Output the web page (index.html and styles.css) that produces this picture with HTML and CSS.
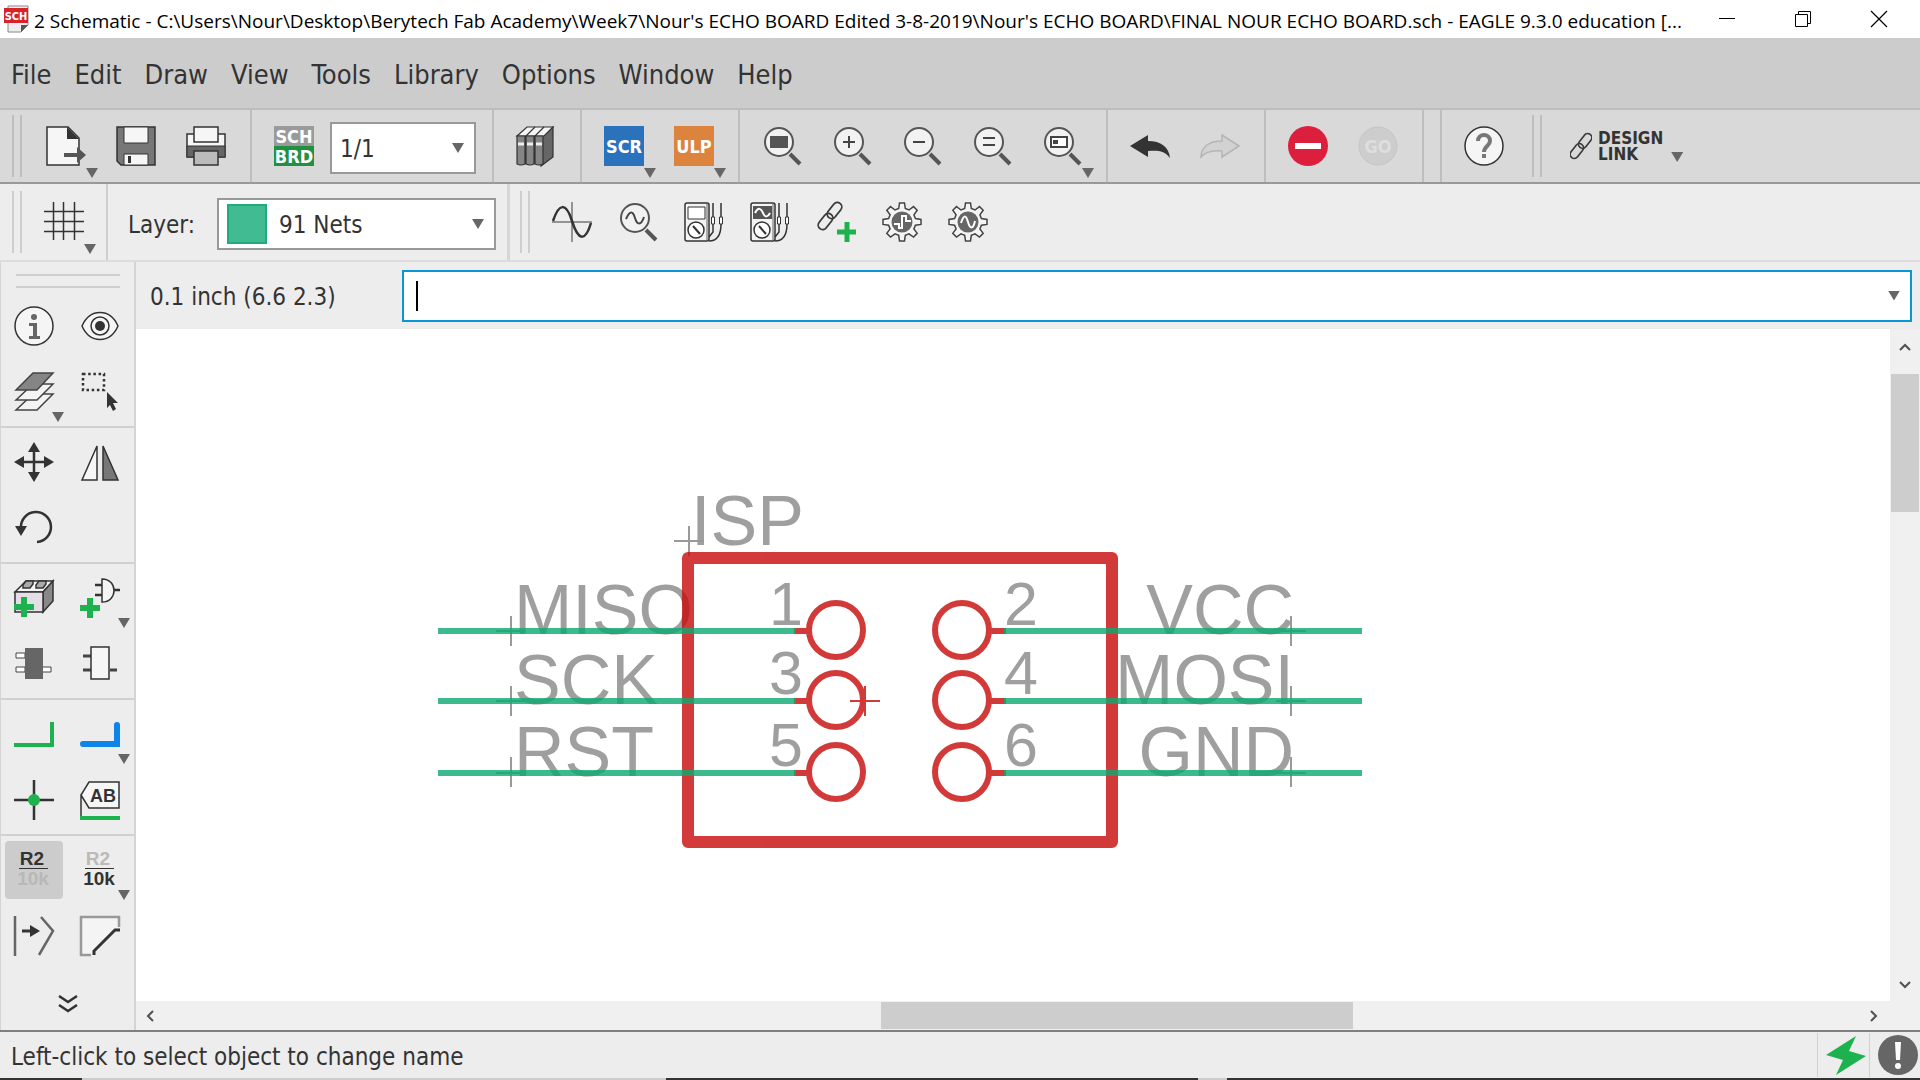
FILE: index.html
```html
<!DOCTYPE html>
<html lang="en">
<head>
<meta charset="utf-8">
<meta name="viewport" content="width=device-width, initial-scale=1">
<title>2 Schematic - EAGLE 9.3.0 education</title>
<link rel="stylesheet" href="styles.css">
</head>
<body>
<svg class="defs" aria-hidden="true">
  <symbol id="lens" viewBox="0 0 40 40">
    <path d="M28 28L38 38" stroke="#555" stroke-width="4"/>
    <circle cx="17" cy="16" r="14" fill="#f2f2f2" stroke="#555" stroke-width="2"/>
  </symbol>
  <symbol id="chain" viewBox="0 0 24 30">
    <g fill="none" stroke="#3a3a3a" stroke-width="1.800">
      <rect x="-4.500" y="-9" width="9" height="18" rx="4.500" transform="translate(16.500 9.500) rotate(38)"/>
      <rect x="-4.500" y="-9" width="9" height="18" rx="4.500" transform="translate(7.500 20.500) rotate(38)"/>
    </g>
  </symbol>
  <symbol id="meter" viewBox="0 0 40 40">
    <rect x="1" y="1" width="24" height="38" rx="2" fill="#f4f4f4" stroke="#333" stroke-width="1.5"/>
    <path d="M22 2h2v36h-2z" fill="#aaa"/>
    <circle cx="12" cy="28" r="8" fill="#fff" stroke="#333" stroke-width="1.5"/>
    <path d="M9 24L16 32" stroke="#333" stroke-width="2"/>
    <path d="M29 1v14M37 1v14" stroke="#333" stroke-width="1.5"/>
    <path d="M27.500 15h3v7h-3zM35.500 15h3v7h-3z" fill="#fff" stroke="#333"/>
    <path d="M29 22v8l-4 5M37 22c0 10-3 17-12 17" fill="none" stroke="#333" stroke-width="1.5"/>
  </symbol>
  <symbol id="gear" viewBox="0 0 40 40">
    <path d="M17.500 1h5l.8 5.500 3.700 1.500 4.500-3.400 3.700 3.700-3.300 4.500 1.500 3.700 5.600.9v5l-5.600.8-1.500 3.700 3.300 4.500-3.700 3.700-4.500-3.300-3.700 1.500-.8 5.600h-5l-.8-5.600-3.700-1.500-4.500 3.300-3.700-3.700 3.300-4.500-1.500-3.700L1 22.400v-5l5.600-.9 1.500-3.700-3.300-4.500 3.700-3.700L13 8l3.700-1.500z" fill="#f4f4f4" stroke="#444" stroke-width="1.500"/>
    <circle cx="20" cy="20" r="10.500" fill="#666"/>
  </symbol>
</svg>

<header class="titlebar">
  <svg class="app-icon" viewBox="0 0 26 28" aria-hidden="true">
    <path d="M4 1h20v19l-7 7H4z" fill="#eee" stroke="#888"/>
    <path d="M24 20h-7v7z" fill="#555"/>
    <path d="M0 3h24v15H0z" fill="#d8232a"/>
    <text x="12" y="15" class="glyph" font-size="11" fill="#fff" text-anchor="middle">SCH</text>
  </svg>
  <h1 class="title">2 Schematic - C:\Users\Nour\Desktop\Berytech Fab Academy\Week7\Nour's ECHO BOARD Edited 3-8-2019\Nour's ECHO BOARD\FINAL NOUR ECHO BOARD.sch - EAGLE 9.3.0 education [...</h1>
  <div class="window-controls">
    <button aria-label="Minimize"><svg viewBox="0 0 18 18"><path d="M1 8.500h16" stroke="#000"/></svg></button>
    <button aria-label="Restore"><svg viewBox="0 0 18 18" fill="none" stroke="#000"><path d="M1.500 4.500h12v12h-12zM4.500 4v-2.500h12v12h-3"/></svg></button>
    <button aria-label="Close"><svg viewBox="0 0 18 18"><path d="M1 1l16 16M17 1L1 17" stroke="#000" stroke-width="1.200"/></svg></button>
  </div>
</header>

<nav class="menubar" aria-label="Main menu">
  <button>File</button><button>Edit</button><button>Draw</button><button>View</button><button>Tools</button><button>Library</button><button>Options</button><button>Window</button><button>Help</button>
</nav>

<div class="toolbar primary" role="toolbar" aria-label="Actions">
  <span class="grip"></span>
  <div class="group">
    <button class="tool drop" aria-label="Open">
      <svg viewBox="0 0 40 40"><path d="M1 1h21l11 11v27H1z" fill="#f6f6f6" stroke="#333" stroke-width="1.500"/><path d="M21 1l12 12H21z" fill="#333"/><path d="M18 27h13v-6l9 8-9 8v-6H18z" fill="#555"/></svg>
    </button>
    <button class="tool" aria-label="Save">
      <svg viewBox="0 0 40 40"><path d="M1 1h38v38H5l-4-4z" fill="#777" stroke="#333" stroke-width="1.500"/><path d="M8 1h24v16H8z" fill="#f6f6f6" stroke="#333"/><path d="M8 28h24v11H8z" fill="#f6f6f6" stroke="#333"/><path d="M12 30h3v7h-3z" fill="#333"/></svg>
    </button>
    <button class="tool" aria-label="Print">
      <svg viewBox="0 0 40 40"><path d="M1 8h38v23H1z" fill="#f6f6f6" stroke="#333" stroke-width="1.500"/><path d="M1 20h38v11H1z" fill="#666" stroke="#333"/><path d="M8 1h24v15H8z" fill="#f6f6f6" stroke="#333" stroke-width="1.500"/><path d="M8 25h24v14H8z" fill="#bbb" stroke="#333" stroke-width="1.500"/></svg>
    </button>
  </div>
  <div class="group fields">
    <button class="tool" aria-label="Switch to board">
      <svg viewBox="0 0 40 40"><path d="M0 0h40v20H0z" fill="#9a9a9a"/><path d="M0 20h40v20H0z" fill="#1f9140"/><text x="20" y="17" class="glyph" font-size="18" fill="#fff" text-anchor="middle">SCH</text><text x="20" y="37" class="glyph" font-size="18" fill="#fff" text-anchor="middle">BRD</text></svg>
    </button>
    <div class="combo sheet">
      <select aria-label="Sheet"><option>1/1</option></select>
    </div>
  </div>
  <div class="group">
    <button class="tool" aria-label="Library manager">
      <svg viewBox="0 0 40 40" stroke="#333" stroke-width="1.200"><path d="M25 10l12-9v30l-12 9z" fill="#666"/><path d="M1 10L11 1h26l-9 9z" fill="#f4f4f4"/><path d="M10 10l9-9M19 10l9-9"/><path d="M1 10h8v28q-4 2-8 0zM10 10h8v28q-4 2-8 0zM19 10h8v28q-4 2-8 0z" fill="#858585"/><path d="M2 18h6M11 18h6M20 18h6" stroke="#eee" stroke-width="3"/></svg>
    </button>
  </div>
  <div class="group">
    <button class="tool drop" aria-label="Run script"><svg viewBox="0 0 40 40"><path d="M0 0h40v40H0z" fill="#2b72bd"/><text x="20" y="27" class="glyph" font-size="18" fill="#fff" text-anchor="middle">SCR</text></svg></button>
    <button class="tool drop" aria-label="Run ULP"><svg viewBox="0 0 40 40"><path d="M0 0h40v40H0z" fill="#dc843d"/><text x="20" y="27" class="glyph" font-size="18" fill="#fff" text-anchor="middle">ULP</text></svg></button>
  </div>
  <div class="group">
    <button class="tool" aria-label="Zoom to fit"><svg viewBox="0 0 40 40"><use href="#lens"/><path d="M8 10h18v12H8z" fill="#555"/></svg></button>
    <button class="tool" aria-label="Zoom in"><svg viewBox="0 0 40 40"><use href="#lens"/><path d="M11 16h12M17 10v12" stroke="#444" stroke-width="2"/></svg></button>
    <button class="tool" aria-label="Zoom out"><svg viewBox="0 0 40 40"><use href="#lens"/><path d="M11 16h12" stroke="#444" stroke-width="2"/></svg></button>
    <button class="tool" aria-label="Redraw"><svg viewBox="0 0 40 40"><use href="#lens"/><path d="M11 12h12M11 19h12" stroke="#444" stroke-width="2"/></svg></button>
    <button class="tool drop" aria-label="Zoom select"><svg viewBox="0 0 40 40"><use href="#lens"/><path d="M9 11h16v10H9z" fill="#fff" stroke="#444" stroke-width="2"/><path d="M11 14h5v4h-5z" fill="#444"/></svg></button>
  </div>
  <div class="group">
    <button class="tool" aria-label="Undo"><svg viewBox="0 0 40 40"><path d="M0 20L18 9v6c13 0 21 6 22 17-5-7-12-8-22-7v6z" fill="#333"/></svg></button>
    <button class="tool" aria-label="Redo" disabled><svg viewBox="0 0 40 40"><path d="M39 20L22 9v6C9 15 1 21 1 31c5-6 12-7 21-6v6z" fill="#d2d2d2" stroke="#b5b5b5" stroke-width="1.500"/></svg></button>
  </div>
  <div class="group">
    <button class="tool" aria-label="Stop"><svg viewBox="0 0 40 40"><circle cx="20" cy="20" r="20" fill="#dc1f3c"/><path d="M7 17h26v6H7z" fill="#fff"/></svg></button>
    <button class="tool" aria-label="Go" disabled><svg viewBox="0 0 40 40"><circle cx="20" cy="20" r="19" fill="#cdcdcd" stroke="#c5c5c5"/><text x="20" y="27" class="glyph" font-size="18" fill="#dedede" text-anchor="middle">GO</text></svg></button>
  </div>
  <div class="group help">
    <button class="tool" aria-label="Help"><svg viewBox="0 0 40 40"><circle cx="20" cy="20" r="19" fill="#f5f5f5" stroke="#333" stroke-width="1.500"/><path d="M14 15c0-8 12-8 12 0 0 5-6 5-6 11" fill="none" stroke="#777" stroke-width="4"/><path d="M18 28h4v4h-4z" fill="#777"/></svg></button>
  </div>
  <span class="grip"></span>
  <button class="design-link drop">
    <svg viewBox="0 0 24 30" aria-hidden="true"><use href="#chain"/></svg>
    <span>DESIGN<br>LINK</span>
  </button>
</div>

<div class="toolbar secondary" role="toolbar" aria-label="Parameters">
  <span class="grip"></span>
  <div class="group grid">
    <button class="tool drop" aria-label="Grid"><svg viewBox="0 0 40 40"><path d="M0 9.500h40M0 19.500h40M0 29.500h40M9.500 0v38M19.500 0v38M30.500 0v38" stroke="#333" stroke-width="1.500"/></svg></button>
  </div>
  <div class="layer">
    <label for="layer">Layer:</label>
    <div class="combo">
      <span class="swatch"></span>
      <select id="layer"><option>91 Nets</option></select>
    </div>
  </div>
  <span class="grip"></span>
  <div class="group simulate">
    <button class="tool" aria-label="Simulate"><svg viewBox="0 0 40 40"><path d="M20 0v40M0 20h40" stroke="#777" stroke-width="1.500"/><path d="M1 19C7 1 14 0 20 19s13 22 19 2" fill="none" stroke="#333" stroke-width="2.500"/></svg></button>
    <button class="tool" aria-label="Probe"><svg viewBox="0 0 40 40"><use href="#lens"/><path d="M8 17c4-9 7-8 9-1s6 8 9-1" fill="none" stroke="#444" stroke-width="2"/></svg></button>
    <button class="tool" aria-label="Voltage meter"><svg viewBox="0 0 40 40"><use href="#meter"/><path d="M4 5h17v12H4z" fill="#fff" stroke="#333"/></svg></button>
    <button class="tool" aria-label="Phase meter"><svg viewBox="0 0 40 40"><use href="#meter"/><path d="M3 4h19v13H3z" fill="#555"/><path d="M5 11c3-6 6-5 8 0s5 4 7 0" fill="none" stroke="#fff" stroke-width="2"/></svg></button>
    <button class="tool" aria-label="Add model"><svg viewBox="0 0 40 40"><use href="#chain" width="28" height="30" x="0" y="-1"/><path d="M31 20v20M21 30h19" stroke="#1eb24f" stroke-width="5"/></svg></button>
    <button class="tool" aria-label="Digital setup"><svg viewBox="0 0 40 40"><use href="#gear"/><path d="M12 22h5v4h3V14h4v5h5" fill="none" stroke="#fff" stroke-width="2"/></svg></button>
    <button class="tool" aria-label="Analog setup"><svg viewBox="0 0 40 40"><use href="#gear"/><path d="M13 21c3-9 5-8 7-1s5 8 7-1" fill="none" stroke="#fff" stroke-width="2"/></svg></button>
  </div>
</div>

<div class="workspace">
  <aside class="palette" aria-label="Tools">
    <div class="tools first">
      <button class="tool" aria-label="Info"><svg viewBox="0 0 40 40"><circle cx="20" cy="20" r="19" fill="#f5f5f5" stroke="#333" stroke-width="1.500"/><path d="M15 17h8v13h3v3H15v-3h4V20h-4z" fill="#666"/><circle cx="20" cy="11" r="3" fill="#666"/></svg></button>
      <button class="tool" aria-label="Show"><svg viewBox="0 0 40 40"><path d="M2 20C10 2 30 2 38 20 30 38 10 38 2 20z" fill="#f5f5f5" stroke="#333" stroke-width="1.500"/><circle cx="20" cy="20" r="9" fill="none" stroke="#333" stroke-width="1.500"/><circle cx="20" cy="20" r="5" fill="#333"/></svg></button>
      <button class="tool drop" aria-label="Layer settings"><svg viewBox="0 0 40 40" stroke="#444" stroke-width="1.500"><path d="M2 38L19 22h20L23 38z" fill="#f4f4f4"/><path d="M2 28L19 12h20L23 28z" fill="#f4f4f4"/><path d="M2 18L19 1h20L23 18z" fill="#858585"/></svg></button>
      <button class="tool" aria-label="Group"><svg viewBox="0 0 40 40"><path d="M3 2h21v16H3z" fill="none" stroke="#333" stroke-width="2.500" stroke-dasharray="2.500 2.700"/><path d="M27 20l11 11h-5l3 6-3 2-3-6-3 3z" fill="#333"/></svg></button>
    </div>
    <div class="tools">
      <button class="tool" aria-label="Move"><svg viewBox="0 0 40 40"><path d="M20 6v28M6 20h28" stroke="#333" stroke-width="2.500"/><path d="M20 0l6 10H14zM20 40l6-10H14zM0 20l10-6v12zM40 20l-10-6v12z" fill="#333"/></svg></button>
      <button class="tool" aria-label="Mirror"><svg viewBox="0 0 40 40" stroke="#333" stroke-width="1.500"><path d="M17 4v34H2z" fill="#f6f6f6"/><path d="M23 4v34h15z" fill="#777"/></svg></button>
      <button class="tool" aria-label="Rotate"><svg viewBox="0 0 40 40"><path d="M7 20a15 15 0 1 1 16 14" fill="none" stroke="#333" stroke-width="2.500"/><path d="M1 18h12L7 28z" fill="#333"/></svg></button>
    </div>
    <div class="tools">
      <button class="tool" aria-label="Add part"><svg viewBox="0 0 40 40" stroke="#333" stroke-width="1.500"><path d="M1 14L12 3h27L29 14z" fill="#f5f5f5"/><path d="M29 14L39 3v20L29 34z" fill="#888"/><path d="M1 14h28v20H1z" fill="#e4dfe6"/><path d="M9 7l3-4h7v3l-3 4H9zM22 7l3-4h7v3l-3 4h-7z" fill="#aaa"/><path d="M10 19v20M0 29h20" stroke="#1eb24f" stroke-width="6"/></svg></button>
      <button class="tool drop" aria-label="Add gate"><svg viewBox="0 0 40 40"><path d="M22 1c16 0 16 23 0 23z" fill="#f5f5f5" stroke="#333" stroke-width="1.500"/><path d="M15 7h7M15 17h7M34 12h6" stroke="#333" stroke-width="2.500"/><path d="M10 20v20M0 30h20" stroke="#1eb24f" stroke-width="6"/></svg></button>
      <button class="tool" aria-label="Replace part"><svg viewBox="0 0 40 40"><path d="M2 9h9v5H2zM2 23h9v5H2zM28 23h9v5h-9z" fill="#fff" stroke="#444"/><path d="M11 4h18v31H11z" fill="#666"/></svg></button>
      <button class="tool" aria-label="Replace symbol"><svg viewBox="0 0 40 40"><path d="M3 12h8M3 26h8M30 26h7" stroke="#444" stroke-width="3"/><path d="M11 3h18v32H11z" fill="#f6f6f6" stroke="#333" stroke-width="1.500"/></svg></button>
    </div>
    <div class="tools">
      <button class="tool" aria-label="Net"><svg viewBox="0 0 40 40"><path d="M0 31h38V8" fill="none" stroke="#1eb24f" stroke-width="4"/></svg></button>
      <button class="tool drop" aria-label="Bus"><svg viewBox="0 0 40 40"><path d="M3 30h34V11" fill="none" stroke="#0d84e8" stroke-width="6" stroke-linecap="round"/></svg></button>
      <button class="tool" aria-label="Junction"><svg viewBox="0 0 40 40"><path d="M20 0v40M0 20h40" stroke="#333" stroke-width="2.500"/><circle cx="20" cy="20" r="6" fill="#1eb24f"/></svg></button>
      <button class="tool" aria-label="Label"><svg viewBox="0 0 40 40"><path d="M1 36V15L9 2h30v26H9L1 15" fill="#f6f6f6" stroke="#333" stroke-width="1.500"/><text x="23" y="22" class="bold-glyph" font-size="18" fill="#333" text-anchor="middle">AB</text><path d="M0 38h40" stroke="#1eb24f" stroke-width="4"/></svg></button>
    </div>
    <div class="tools">
      <button class="tool selected" aria-label="Name"><svg viewBox="0 0 40 40"><text x="18" y="15" class="bold-glyph" font-size="19" fill="#333" text-anchor="middle">R2</text><path d="M5 18.500h29" stroke="#333"/><text x="19" y="35" class="bold-glyph" font-size="19" fill="#b8b8b8" text-anchor="middle">10k</text></svg></button>
      <button class="tool drop" aria-label="Value"><svg viewBox="0 0 40 40"><text x="18" y="15" class="bold-glyph" font-size="19" fill="#bababa" text-anchor="middle">R2</text><path d="M5 18.500h29" stroke="#333"/><text x="19" y="35" class="bold-glyph" font-size="19" fill="#333" text-anchor="middle">10k</text></svg></button>
      <button class="tool" aria-label="Split"><svg viewBox="0 0 40 40"><path d="M1 0v40M27 1l12 14-14 24" fill="none" stroke="#666" stroke-width="2.500"/><path d="M8 15h11" stroke="#333" stroke-width="3"/><path d="M16 9l10 6-10 6z" fill="#333"/></svg></button>
      <button class="tool" aria-label="Miter"><svg viewBox="0 0 40 40"><path d="M11 39H1V1h38v10" fill="#f4f4f4" stroke="#999" stroke-width="2.500"/><path d="M14 39v-4l21-21h5" fill="none" stroke="#333" stroke-width="3"/></svg></button>
    </div>
    <button class="more" aria-label="More tools"><svg viewBox="0 0 20 18"><path d="M1 1l9 6 9-6M1 10l9 6 9-6" fill="none" stroke="#333" stroke-width="2.500"/></svg></button>
  </aside>

  <main class="editor">
    <div class="command">
      <span class="coords">0.1 inch (6.6 2.3)</span>
      <div class="combo command-line"><span class="caret"></span><input type="text" aria-label="Command line"></div>
    </div>
    <div class="sheet-view">
      <svg class="schematic" viewBox="136 329 1754 672" role="img" aria-label="ISP connector schematic">
        <g class="names">
          <text x="691" y="545">ISP</text>
          <text x="514" y="634">MISO</text><text x="514" y="704">SCK</text><text x="514" y="776">RST</text>
          <g text-anchor="end"><text x="1294" y="634">VCC</text><text x="1294" y="704">MOSI</text><text x="1294" y="776">GND</text></g>
        </g>
        <g class="pads">
          <text x="769" y="625">1</text><text x="769" y="694">3</text><text x="769" y="766">5</text>
          <text x="1004" y="625">2</text><text x="1004" y="694">4</text><text x="1004" y="766">6</text>
        </g>
        <path class="origin" d="M674 541h30M689 526v30M496 631h30M511 616v30M496 701h30M511 686v30M496 773h30M511 757v30M1276 631h30M1291 616v30M1276 701h30M1291 686v30M1276 773h30M1291 757v30"/>
        <g class="symbol">
          <rect x="688" y="558" width="424" height="284" stroke-width="12" stroke-linejoin="round"/>
          <g stroke-width="6">
            <circle cx="836" cy="630" r="27"/><circle cx="836" cy="700" r="27"/><circle cx="836" cy="772" r="27"/>
            <circle cx="962" cy="630" r="27"/><circle cx="962" cy="700" r="27"/><circle cx="962" cy="772" r="27"/>
            <path d="M794 631h13M794 701h13M794 773h13M991 631h15M991 701h15M991 773h15"/>
          </g>
          <path stroke-width="2" d="M850 701h30M865 686v30"/>
        </g>
        <path class="nets" d="M438 631h358M438 701h358M438 773h358M1004 631h358M1004 701h358M1004 773h358"/>
      </svg>
      <div class="vscroll"><svg viewBox="0 0 12 8"><path d="M1 7l5-5 5 5"/></svg><span class="thumb"></span><svg viewBox="0 0 12 8"><path d="M1 1l5 5 5-5"/></svg></div>
      <div class="hscroll"><svg viewBox="0 0 8 12"><path d="M7 1L2 6l5 5"/></svg><span class="thumb"></span><svg viewBox="0 0 8 12"><path d="M1 1l5 5-5 5"/></svg></div>
    </div>
  </main>
</div>

<footer class="status">
  <span class="message">Left-click to select object to change name</span>
  <button aria-label="Live update"><svg viewBox="0 0 40 40"><path d="M30 1L0 20l17 5-7 15 30-19-17-5z" fill="#1eb24f"/></svg></button>
  <button aria-label="Errors"><svg viewBox="0 0 40 40"><circle cx="20" cy="20" r="20" fill="#666"/><path d="M17 7h6l-1 18h-4z" fill="#fff"/><circle cx="20" cy="31" r="3" fill="#fff"/></svg></button>
</footer>
</body>
</html>
```
FILE: styles.css
```css
* { box-sizing: border-box; }

body {
  display: flex;
  flex-direction: column;
  min-height: 100vh;
  margin: 0;
  background: #ededed;
  color: #333;
  font: 24px "DejaVu Sans Condensed", "DejaVu Sans", sans-serif;
}

button {
  padding: 0;
  border: 0;
  background: none;
  color: inherit;
  font: inherit;
}

svg { display: block; }
.defs { position: absolute; width: 0; height: 0; }
.glyph { font-family: "DejaVu Sans Condensed", sans-serif; font-weight: bold; }
.bold-glyph { font-family: "Liberation Sans", sans-serif; font-weight: bold; }

/* Title bar */
.titlebar {
  display: flex;
  align-items: center;
  height: 38px;
  padding-left: 4px;
  background: #fff;
}
.app-icon { flex: none; width: 26px; height: 28px; }
.title {
  flex: 1;
  min-width: 0;
  margin: 4px 0 0 4px;
  overflow: hidden;
  color: #000;
  font: 19px "Open Sans", sans-serif;
  white-space: nowrap;
}
.window-controls { display: flex; flex: none; padding-right: 3px; }
.window-controls button { display: grid; place-items: center; width: 76px; height: 38px; }
.window-controls svg { width: 18px; height: 18px; }

/* Menu bar */
.menubar {
  display: flex;
  gap: 23px;
  height: 72px;
  padding: 2px 0 0 11px;
  border-bottom: 2px solid #bdbdbd;
  background: #ccc;
  font-size: 27px;
}

/* Toolbars */
.toolbar { display: flex; align-items: center; padding-left: 12px; }
.primary { height: 74px; border-bottom: 2px solid #999; background: #d9d9d9; }
.secondary { height: 78px; border-bottom: 2px solid #dcdcdc; }
.grip {
  flex: none;
  width: 10px;
  height: 62px;
  border: solid #bebebe;
  border-width: 0 2px;
}
.primary .grip:first-child { margin-right: 2px; }
.secondary .grip { border-color: #cecece; }
.group {
  display: flex;
  align-items: center;
  gap: 30px;
  height: 100%;
  padding: 0 24px 0 22px;
  border-right: 2px solid #bebebe;
}
.fields { gap: 16px; padding-right: 16px; }
.help { margin-left: 16px; padding-right: 28px; border-right: 0; border-left: 2px solid #bebebe; }
.tool { position: relative; flex: none; width: 40px; height: 40px; }
.tool svg { width: 40px; height: 40px; overflow: visible; }

.drop::after,
.combo::after {
  content: "";
  width: 12px;
  height: 10px;
  background: #666;
  clip-path: polygon(0 0, 100% 0, 50% 100%);
}
.drop::after { position: absolute; right: -12px; bottom: -12px; }

.design-link {
  display: flex;
  align-items: center;
  gap: 6px;
  position: relative;
  margin-left: 28px;
  font: bold 17px/16px "DejaVu Sans Condensed", sans-serif;
  text-align: left;
}
.design-link svg { width: 22px; height: 28px; }
.design-link.drop::after { right: -20px; bottom: 0; }

.combo {
  display: flex;
  align-items: center;
  height: 52px;
  padding: 0 10px 0 8px;
  border: 2px solid #999;
  background: #fff;
}
.combo select,
.combo input {
  flex: 1;
  min-width: 0;
  height: 100%;
  padding: 2px 0 0;
  border: 0;
  outline: 0;
  appearance: none;
  background: none;
  color: inherit;
  font: inherit;
}
.sheet { width: 146px; margin-top: 4px; }
.layer {
  display: flex;
  align-items: center;
  height: 100%;
  margin-right: 10px;
  padding: 4px 11px 0 20px;
  border-right: 3px solid #d6d6d6;
}
.layer label { width: 89px; padding-top: 2px; }
.layer .combo { width: 279px; }
.swatch {
  width: 40px;
  height: 40px;
  margin-right: 12px;
  border: 2px solid #1fac79;
  background: #41bb92;
}
.secondary .group { border-color: #cecece; }
.secondary .grid { padding-right: 22px; }
.secondary .simulate { gap: 26px; border: 0; }

/* Tool palette */
.workspace { display: flex; flex: 1; }
.palette {
  display: flex;
  flex: none;
  flex-direction: column;
  width: 136px;
  border-right: 2px solid #d4d4d4;
  border-left: 1px solid #d4d4d4;
}
.tools {
  display: grid;
  grid-template-columns: 66px 66px;
  grid-auto-rows: 66px;
  place-items: center;
  height: 136px;
  padding-top: 1px;
  border-bottom: 2px solid #d0d0d0;
}
.tools:nth-child(5) { border-bottom: 0; }
.first { height: 166px; padding-top: 31px; position: relative; }
.first::before {
  content: "";
  position: absolute;
  top: 12px;
  left: 15px;
  width: 104px;
  height: 10px;
  border: solid #cecece;
  border-width: 2px 0;
}
.tools .drop::after { right: -10px; bottom: -10px; }
.selected { width: 58px; height: 58px; padding: 9px; border-radius: 4px; background: #ccc; }
.more { display: grid; flex: 1; place-items: center; padding-top: 6px; }
.more svg { width: 20px; height: 18px; }

/* Editor */
.editor { display: flex; flex: 1; flex-direction: column; min-width: 0; }
.command { display: flex; align-items: center; height: 67px; padding: 0 8px 0 14px; }
.coords { width: 252px; padding-top: 2px; }
.command-line { flex: 1; padding-left: 12px; border-color: #0996d5; }
.caret { width: 2px; height: 30px; background: #000; }

.sheet-view {
  display: grid;
  flex: 1;
  grid-template: 1fr 29px / 1fr 30px;
  background: #f0f0f0;
}
.schematic { width: 100%; height: 100%; min-height: 0; background: #fff; }
.names { fill: #9f9f9f; font: 70px "Liberation Sans", sans-serif; }
.pads { fill: #9f9f9f; font: 61px "Liberation Sans", sans-serif; }
.origin { stroke: #999; stroke-width: 2; }
.symbol { fill: none; stroke: #c80909; opacity: 0.8; }
.nets { stroke: #0caa73; stroke-width: 6; opacity: 0.8; }

.vscroll,
.hscroll { display: flex; align-items: center; }
.vscroll { flex-direction: column; padding: 14px 0 12px; }
.vscroll svg { width: 12px; height: 8px; }
.hscroll svg { width: 8px; height: 12px; }
.hscroll { padding: 0 12px 0 10px; }
.vscroll path,
.hscroll path { fill: none; stroke: #505050; stroke-width: 2; }
.vscroll .thumb { width: 28px; height: 138px; margin: 23px 0 auto; background: #cdcdcd; }
.hscroll .thumb { width: 472px; height: 27px; margin: 0 auto 0 42%; background: #cdcdcd; }

/* Status bar */
.status {
  display: flex;
  align-items: center;
  height: 50px;
  padding: 0 2px 2px 11px;
  border-top: 2px solid #7f7f7f;
  background: linear-gradient(90deg, #333 82px, #ccc 82px 666px, #333 666px 1198px, #ccc 1198px 1227px, #333 1227px) bottom / 100% 2px no-repeat;
}
.message { flex: 1; padding-top: 4px; }
.status button { padding: 2px 0 2px 8px; border-left: 1px solid #d0d0d0; margin-left: 3px; }
.status svg { width: 40px; height: 40px; }
```
